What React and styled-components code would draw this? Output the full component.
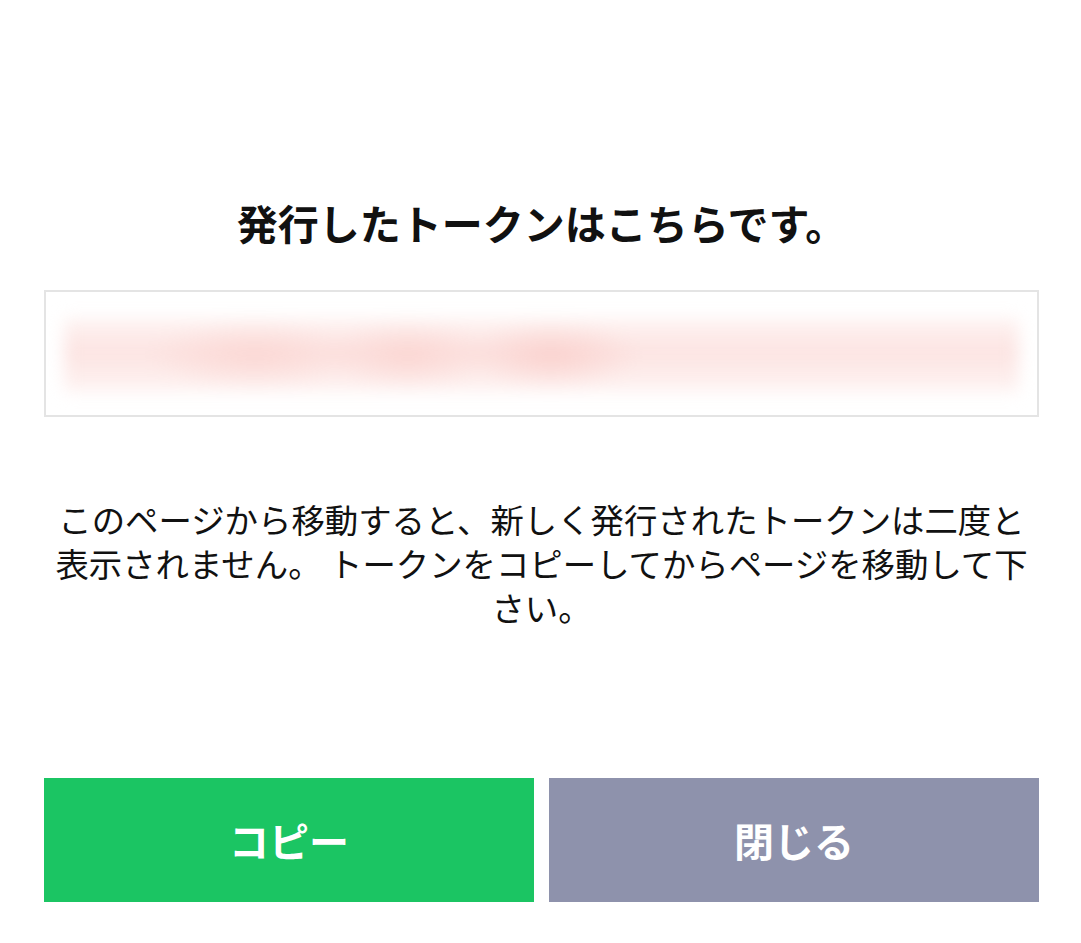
import styled, { createGlobalStyle } from 'styled-components'

const GlobalStyle = createGlobalStyle`
  html, body {
    margin: 0;
    padding: 0;
    background: #fff;
  }
  body {
    font-family: "Noto Sans CJK JP", "Noto Sans", sans-serif;
    color: #1a1a1a;
  }
`

const Page = styled.div`
  display: flex;
  flex-direction: column;
  padding: 197px 42px 0 44px;
`

const Title = styled.h1`
  margin: 0;
  font-size: 41px;
  line-height: 50px;
  font-weight: 700;
  text-align: center;
  color: #111;
`

const TokenBox = styled.div`
  margin-top: 43px;
  box-sizing: border-box;
  height: 127px;
  border: 2px solid #e4e4e4;
  padding: 26px 18px 0;
  overflow: hidden;
`

const Blurred = styled.div`
  height: 74px;
  background:
    radial-gradient(ellipse 110px 34px at 20% 50%, rgba(251, 212, 208, 0.8), transparent),
    radial-gradient(ellipse 90px 34px at 36% 50%, rgba(251, 210, 206, 0.8), transparent),
    radial-gradient(ellipse 90px 34px at 51% 50%, rgba(250, 206, 202, 0.85), transparent),
    linear-gradient(to bottom, rgba(253, 236, 234, 0.6), rgba(252, 226, 224, 0.95) 45%, rgba(253, 236, 234, 0.6));
  filter: blur(8px);
`

const Notice = styled.p`
  margin: 80px 0 0;
  padding: 0 8px;
  font-size: 33.4px;
  line-height: 44px;
  text-align: center;
  color: #111;
`

const Buttons = styled.div`
  display: grid;
  grid-template-columns: 1fr 1fr;
  gap: 15px;
  margin-top: 149px;
`

const Button = styled.button`
  height: 124px;
  border: none;
  background: ${props => props.bg};
  color: #fff;
  font-family: "Noto Sans CJK JP", "Noto Sans", sans-serif;
  font-size: 40px;
  font-weight: 700;
  cursor: pointer;
`

const App = () => {
  return (
    <>
      <GlobalStyle />
      <Page>
        <Title>発行したトークンはこちらです。</Title>
        <TokenBox>
          <Blurred />
        </TokenBox>
        <Notice>
          このページから移動すると、新しく発行されたトークンは二度と表示されません。 トークンをコピーしてからページを移動して下さい。
        </Notice>
        <Buttons>
          <Button bg="#1bc563">コピー</Button>
          <Button bg="#8e92ac">閉じる</Button>
        </Buttons>
      </Page>
    </>
  )
}

export default App
